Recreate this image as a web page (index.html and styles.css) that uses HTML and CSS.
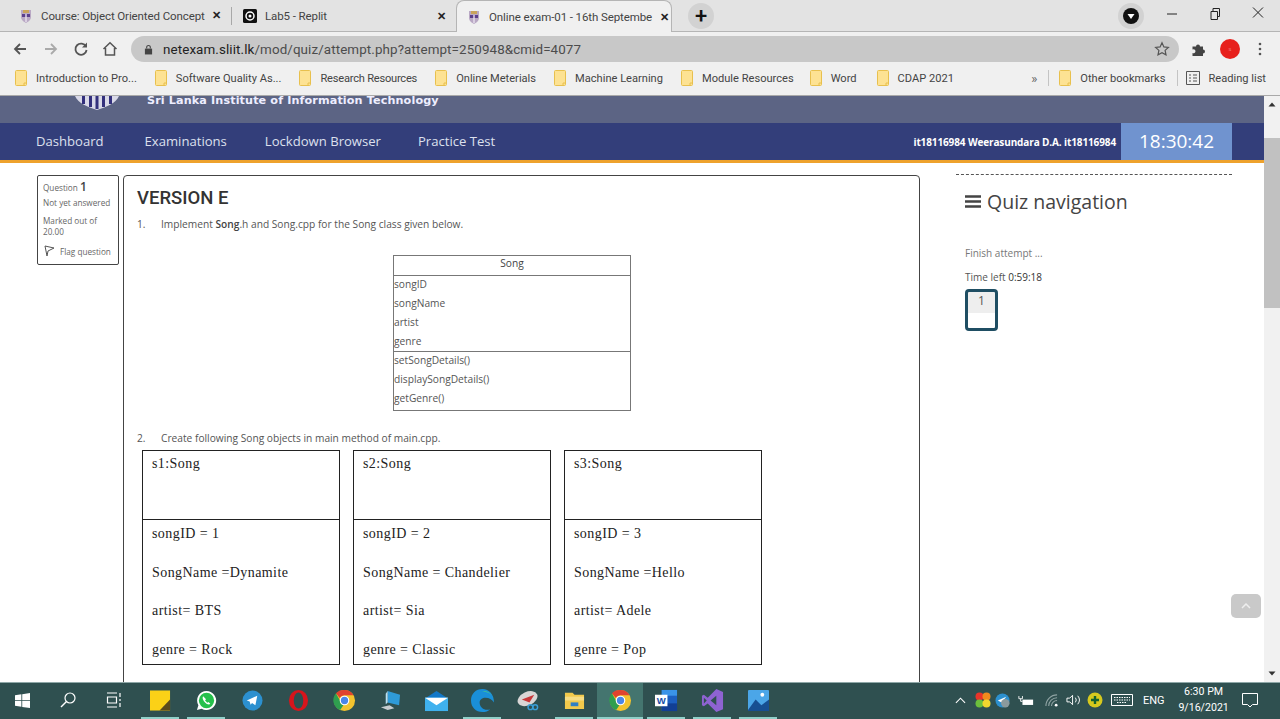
FILE: index.html
```html
<!DOCTYPE html>
<html lang="en">
<head>
<meta charset="utf-8">
<title>Online exam-01 - 16th September</title>
<link rel="stylesheet" href="styles.css">
</head>
<body>
<svg width="0" height="0" class="defs">
  <defs>
    <symbol id="shield" viewBox="0 0 14 14"><path d="M2 1h10v7c0 3-3 5-5 6-2-1-5-3-5-6z" fill="#b9a8c4"/><path d="M3 5h8v3H3z" fill="#5b3f8c"/><path d="M4 1h6v3H4z" fill="#c9a35c"/><path d="M6.300 5h1.400v8H6.300z" fill="#e8e0ee"/></symbol>
    <symbol id="folder" viewBox="0 0 12 16"><path d="M.5 1.500a1 1 0 0 1 1-1h9a1 1 0 0 1 1 1v13a1 1 0 0 1-1 1h-9a1 1 0 0 1-1-1z" fill="#fde293" stroke="#e8c04e"/><path d="M9 15.500V13h2.500" fill="none" stroke="#e8c04e"/></symbol>
    <symbol id="chrome" viewBox="0 0 24 24"><circle cx="12" cy="12" r="11" fill="#f2c32e"/><path d="M12 1a11 11 0 0 1 9.500 5.500H12A5.500 5.500 0 0 0 7 9.500L3 4.500A11 11 0 0 1 12 1z" fill="#e0432f"/><path d="M3 4.500 7.300 12a5 5 0 0 0 3.500 5L7.500 22A11 11 0 0 1 3 4.500z" fill="#2f9e4f"/><circle cx="12" cy="12" r="5" fill="#fff"/><circle cx="12" cy="12" r="3.800" fill="#4a86e8"/></symbol>
  </defs>
</svg>
<header class="browser">
  <div class="tabstrip">
    <div class="tab tab-one">
      <svg class="favicon"><use href="#shield"/></svg>
      <span class="tab-title">Course: Object Oriented Concept</span>
      <span class="tab-close">✕</span>
    </div>
    <div class="tab tab-two">
      <svg class="favicon" viewBox="0 0 14 14"><rect width="14" height="14" rx="1.500" fill="#111"/><circle cx="7" cy="7" r="4" fill="none" stroke="#fff" stroke-width="1.500"/><circle cx="7" cy="7" r="1.500" fill="#fff"/></svg>
      <span class="tab-title">Lab5 - Replit</span>
      <span class="tab-close">✕</span>
    </div>
    <div class="tab tab-active">
      <svg class="favicon"><use href="#shield"/></svg>
      <span class="tab-title">Online exam-01 - 16th Septembe</span>
      <span class="tab-close">✕</span>
    </div>
    <div class="new-tab">+</div>
    <div class="window-controls">
      <div class="media-badge"><svg width="16" height="16" viewBox="0 0 16 16"><circle cx="8" cy="8" r="8" fill="#111"/><path d="M4.500 6h7L8 11z" fill="#fff"/></svg></div>
      <svg class="win-btn" viewBox="0 0 44 20"><path d="M19 11h10" stroke="#222" fill="none"/></svg>
      <svg class="win-btn" viewBox="0 0 44 20"><path d="M19 8.500h6.500v8H19zM21 8.500V5.500h6.500v8h-2" stroke="#222" fill="none"/></svg>
      <svg class="win-btn" viewBox="0 0 44 20"><path d="M17 4.500l10 10M27 4.500l-10 10" stroke="#222" fill="none"/></svg>
    </div>
  </div>
  <div class="toolbar">
    <svg class="tool tool-back" viewBox="0 0 16 16"><path d="M14 8H3M8 3 3 8l5 5" fill="none" stroke="#555" stroke-width="1.800"/></svg>
    <svg class="tool tool-forward" viewBox="0 0 16 16"><path d="M2 8h11M8 3l5 5-5 5" fill="none" stroke="#aaa" stroke-width="1.800"/></svg>
    <svg class="tool tool-reload" viewBox="0 0 16 16"><path d="M13 5.500A5.600 5.600 0 1 0 13.600 9" fill="none" stroke="#555" stroke-width="1.800"/><path d="M14 1.500v5h-5z" fill="#555"/></svg>
    <svg class="tool tool-home" viewBox="0 0 16 16"><path d="M1.500 8 8 1.800 14.500 8M3.500 7v7h9V7" fill="none" stroke="#555" stroke-width="1.500"/></svg>
    <div class="omnibox">
      <svg class="lock" viewBox="0 0 10 12"><path d="M1 5h8v6.500H1z" fill="#444"/><path d="M3 5V3.500a2 2 0 0 1 4 0V5" fill="none" stroke="#444" stroke-width="1.200"/></svg>
      <span class="url">netexam.sliit.lk<span class="url-path">/mod/quiz/attempt.php?attempt=250948&amp;cmid=4077</span></span>
      <svg class="star" viewBox="0 0 16 16"><path d="m8 1.800 1.900 4.100 4.500.5-3.300 3 .9 4.400L8 11.600l-4 2.200.9-4.400-3.300-3 4.500-.5z" fill="none" stroke="#555" stroke-width="1.200"/></svg>
    </div>
    <svg class="puzzle" viewBox="0 0 16 16"><path d="M1.500 5.500h3.500a2 2 0 1 1 4 0h3v3a2 2 0 1 1 0 4v2.500H1.500v-3a2 2 0 1 0 0-3.500z" fill="#444"/></svg>
    <div class="avatar">s</div>
    <svg class="kebab" viewBox="0 0 4 14"><circle cx="2" cy="2" r="1.300" fill="#555"/><circle cx="2" cy="7" r="1.300" fill="#555"/><circle cx="2" cy="12" r="1.300" fill="#555"/></svg>
  </div>
  <nav class="bookmarks">
    <a class="bm bm-1"><svg class="folder"><use href="#folder"/></svg>Introduction to Pro...</a>
    <a class="bm bm-2"><svg class="folder"><use href="#folder"/></svg>Software Quality As...</a>
    <a class="bm bm-3"><svg class="folder"><use href="#folder"/></svg>Research Resources</a>
    <a class="bm bm-4"><svg class="folder"><use href="#folder"/></svg>Online Meterials</a>
    <a class="bm bm-5"><svg class="folder"><use href="#folder"/></svg>Machine Learning</a>
    <a class="bm bm-6"><svg class="folder"><use href="#folder"/></svg>Module Resources</a>
    <a class="bm bm-7"><svg class="folder"><use href="#folder"/></svg>Word</a>
    <a class="bm bm-8"><svg class="folder"><use href="#folder"/></svg>CDAP 2021</a>
    <span class="bm-more">»</span>
    <span class="bm-sep"></span>
    <a class="bm bm-9"><svg class="folder"><use href="#folder"/></svg>Other bookmarks</a>
    <span class="bm-sep bm-sep-two"></span>
    <a class="bm bm-10"><svg class="reading" viewBox="0 0 14 14"><path d="M.5.500h13v13H.500zM3 4h2M3 7h2M3 10h2M7 4h4M7 7h4M7 10h4" fill="none" stroke="#555"/></svg>Reading list</a>
  </nav>
</header>

<div class="viewport">
  <div class="page">
    <div class="brand">
      <svg class="brand-logo" viewBox="0 0 44 14"><path d="M0 0h44c-3 7-12 11-22 14C12 11 3 7 0 0z" fill="#d9d9e8"/><path d="M7 0h3v8H7zM14 0h3v11h-3zM20.500 0h3v13h-3zM27 0h3v11h-3zM34 0h3v8h-3z" fill="#33307c"/></svg>
      <span class="brand-name">Sri Lanka Institute of Information Technology</span>
    </div>
    <div class="navbar">
      <a class="nav-link nav-dash">Dashboard</a>
      <a class="nav-link nav-exam">Examinations</a>
      <a class="nav-link nav-lock">Lockdown Browser</a>
      <a class="nav-link nav-test">Practice Test</a>
      <span class="user-name">it18116984 Weerasundara D.A. it18116984</span>
      <span class="timer">18:30:42</span>
    </div>
    <main class="main">
      <aside class="q-info">
        <div class="q-no">Question <b>1</b></div>
        <div class="q-line">Not yet answered</div>
        <div class="q-line q-mark">Marked out of 20.00</div>
        <div class="q-flag">
          <svg class="flag" viewBox="0 0 12 12"><path d="M2 1 11 3 5 6 4 11z" fill="none" stroke="#555"/></svg>
          Flag question
        </div>
      </aside>
      <section class="question">
        <h1 class="version">VERSION E</h1>
        <p class="step"><span class="step-no">1.</span>Implement <b>Song</b>.h and Song.cpp for the Song class given below.</p>
        <div class="uml">
          <div class="uml-head">Song</div>
          <div class="uml-attrs">
            <div>songID</div><div>songName</div><div>artist</div><div>genre</div>
          </div>
          <div class="uml-methods">
            <div>setSongDetails()</div><div>displaySongDetails()</div><div>getGenre()</div>
          </div>
        </div>
        <p class="step step-two"><span class="step-no">2.</span>Create following Song objects in main method of main.cpp.</p>
        <div class="objects">
          <div class="obj">
            <div class="obj-name">s1:Song</div>
            <div class="obj-fields"><div>songID = 1</div><div>SongName =Dynamite</div><div>artist= BTS</div><div>genre = Rock</div></div>
          </div>
          <div class="obj">
            <div class="obj-name">s2:Song</div>
            <div class="obj-fields"><div>songID = 2</div><div>SongName = Chandelier</div><div>artist= Sia</div><div>genre = Classic</div></div>
          </div>
          <div class="obj">
            <div class="obj-name">s3:Song</div>
            <div class="obj-fields"><div>songID = 3</div><div>SongName =Hello</div><div>artist= Adele</div><div>genre = Pop</div></div>
          </div>
        </div>
      </section>
      <aside class="quiz-nav">
        <h2 class="quiz-title"><svg class="burger" viewBox="0 0 16 13"><path d="M0 1.500h16M0 6.500h16M0 11.500h16" stroke="#444" stroke-width="2.400"/></svg>Quiz navigation</h2>
        <div class="finish">Finish attempt ...</div>
        <div class="time-left">Time left <span class="time-val">0:59:18</span></div>
        <div class="q-button"><span class="q-button-no">1</span></div>
      </aside>
    </main>
    <button class="to-top"><svg width="10" height="6" viewBox="0 0 10 6"><path d="M1 5l4-4 4 4" fill="none" stroke="#eee" stroke-width="1.500"/></svg></button>
  </div>
  <div class="scrollbar">
    <svg class="sb-arrow" viewBox="0 0 16 16"><path d="M4.500 10 8 6l3.500 4z" fill="#333"/></svg>
    <div class="sb-track"><div class="sb-thumb"></div></div>
    <svg class="sb-arrow" viewBox="0 0 16 16"><path d="M4.500 6 8 10l3.500-4z" fill="#333"/></svg>
  </div>
</div>

<footer class="taskbar">
  <div class="task"><svg viewBox="0 0 16 16" class="ti ti-win"><path d="M0 2.300 6.800 1.300v6.300H0zM7.700 1.200 16 0v7.600H7.700zM0 8.400h6.800v6.300L0 13.700zM7.700 8.400H16V16l-8.300-1.200z" fill="#fff"/></svg></div>
  <div class="task"><svg viewBox="0 0 16 16" class="ti ti-small"><circle cx="10" cy="6" r="5" fill="none" stroke="#fff" stroke-width="1.200"/><path d="M6.500 9.500 1 15" stroke="#fff" stroke-width="1.400"/></svg></div>
  <div class="task"><svg viewBox="0 0 16 16" class="ti ti-small"><path d="M1 1h10M1 15h10M1.500 5h9v6h-9zM14 1v4M14 7v2M14 11v4" fill="none" stroke="#fff" stroke-width="1.200"/></svg></div>
  <div class="task task-open"><svg viewBox="0 0 22 22" class="ti"><rect width="21" height="21" y=".5" fill="#fbd117"/><path d="M21 10v11.500H10z" fill="#5b4a1c"/></svg></div>
  <div class="task task-open"><svg viewBox="0 0 22 22" class="ti"><path d="M11 1a10 10 0 0 0-8.500 15L1 21l5-1.400A10 10 0 1 0 11 1z" fill="#fff"/><circle cx="11" cy="11" r="8" fill="#25c04c"/><path d="M7.500 6.500c-1.500 2 .5 5 2 6.500s4 3 5.500 1.500l-2-2-1 .8c-1-.5-2-1.500-2.500-2.500l1-1z" fill="#fff"/></svg></div>
  <div class="task"><svg viewBox="0 0 22 22" class="ti"><circle cx="11" cy="11" r="10.500" fill="#2c90cf"/><path d="M5 11l11-5-2 10-3.500-2.500-1.500 2-1-3.500z" fill="#fff"/></svg></div>
  <div class="task"><svg viewBox="0 0 22 22" class="ti"><ellipse cx="11" cy="11" rx="10" ry="11" fill="#d8151c"/><ellipse cx="11" cy="11" rx="5" ry="8.500" fill="#2f5050"/></svg></div>
  <div class="task"><svg class="ti ti-wide"><use href="#chrome"/></svg></div>
  <div class="task"><svg viewBox="0 0 22 22" class="ti"><path d="M8 1l13 4-1 11-12-3z" fill="#2f9bd8"/><path d="M1 18l9-2 5 3-7 2z" fill="#c8cdd0"/><path d="M6 4l2-3v12l-2 2z" fill="#b9e0f2"/></svg></div>
  <div class="task"><svg viewBox="0 0 24 22" class="ti ti-wide"><path d="M12 1 24 9v13H0V9z" fill="#1278c8"/><path d="M0 8h24v14H0z" fill="#3fb1ee"/><path d="M0 8l12 8 12-8z" fill="#fff"/></svg></div>
  <div class="task task-open"><svg viewBox="0 0 24 24" class="ti ti-wide"><path d="M12 0C5 0 0 5 0 12c0 7 5 12 12 12 3 0 6-1 8-3-5 2-11-1-11-7 0-3 3-5 6-5 4 0 7 2 9 5C24 6 19 0 12 0z" fill="#1a8fd8"/><path d="M24 14c0-7-6-14-13-11 7-1 13 3 13 11z" fill="#48cf8a"/></svg></div>
  <div class="task task-short"><svg viewBox="0 0 24 22" class="ti ti-wide"><ellipse cx="11" cy="9" rx="11" ry="7" transform="rotate(-25 11 9)" fill="#d9d6d6"/><path d="M5 10l13-5-5 8z" fill="#c8383a"/><circle cx="14" cy="18" r="2.500" fill="none" stroke="#3a9fd8" stroke-width="1.500"/><circle cx="19" cy="18" r="2.500" fill="none" stroke="#3a9fd8" stroke-width="1.500"/></svg></div>
  <div class="task task-open"><svg viewBox="0 0 22 20" class="ti"><path d="M1 2h8l2 2h10v15H1z" fill="#f2c94c"/><path d="M1 6h20v4H1z" fill="#f7dd84"/><path d="M7 12h8v4H7z" fill="#2f7fc4"/></svg></div>
  <div class="task task-active"><svg class="ti ti-wide"><use href="#chrome"/></svg></div>
  <div class="task task-open"><svg viewBox="0 0 24 22" class="ti ti-wide"><path d="M7 0h16v22H7z" fill="#1d5fc0"/><path d="M7 0h16v6H7z" fill="#3a93e8"/><path d="M7 14h16v8H7z" fill="#123f94"/><path d="M0 5h13v12H0z" fill="#fff"/><text x="6.500" y="15" font-size="10" font-weight="700" text-anchor="middle" fill="#174ea6" font-family="Liberation Sans">W</text></svg></div>
  <div class="task task-open"><svg viewBox="0 0 22 24" class="ti ti-wide"><path d="M15 0 22 3v18l-7 3-9-9-4 3-2-1V7l2-1 4 3z" fill="#8e63d2"/><path d="M15 7v10l-6-5z" fill="#2f5050"/><path d="M2 9l3 3-3 3z" fill="#2f5050"/></svg></div>
  <div class="task task-open"><svg viewBox="0 0 22 22" class="ti"><rect width="22" height="22" rx="1" fill="#4ba6e8"/><path d="M0 21l8-11 6 6 8-6v12H0z" fill="#174f92"/><circle cx="15" cy="5" r="2" fill="#fff"/></svg></div>
  <div class="tray">
    <svg class="tray-chev" viewBox="0 0 12 7"><path d="M1 6l5-5 5 5" fill="none" stroke="#fff" stroke-width="1.200"/></svg>
    <svg class="tray-colors" viewBox="0 0 16 16"><circle cx="4.500" cy="4.500" r="4" fill="#e8342a"/><circle cx="11.500" cy="4.500" r="4" fill="#f08a1d"/><circle cx="4.500" cy="11.500" r="4" fill="#6cbf3c"/><circle cx="11.500" cy="11.500" r="4" fill="#f2d62e"/></svg>
    <svg class="tray-tg" viewBox="0 0 16 16"><circle cx="8" cy="8" r="7.500" fill="#2c90cf"/><path d="M3 8l9-4-5 6z" fill="#fff"/><circle cx="11" cy="11" r="4.500" fill="#8a9a9d"/></svg>
    <svg class="tray-batt" viewBox="0 0 18 14"><path d="M5 6h12v6H5z" fill="#fff"/><path d="M1 2v3h4V2M3 5v3h2" fill="none" stroke="#fff"/></svg>
    <svg class="tray-wifi" viewBox="0 0 14 14"><path d="M1 13A12 12 0 0 1 13 1M4 13a9 9 0 0 1 9-9M7 13a6 6 0 0 1 6-6" fill="none" stroke="#8fa3a3" stroke-width="1.200"/><circle cx="12" cy="12" r="1.500" fill="#fff"/></svg>
    <svg class="tray-vol" viewBox="0 0 16 14"><path d="M1 5h3l3-3v10L4 9H1z" fill="none" stroke="#fff"/><path d="M10 4.500a4 4 0 0 1 0 5M12.500 2.500a7 7 0 0 1 0 9" fill="none" stroke="#fff"/></svg>
    <svg class="tray-plus" viewBox="0 0 16 16"><circle cx="8" cy="8" r="7.500" fill="#d6c91e"/><path d="M8 4v8M4 8h8" stroke="#14612e" stroke-width="2.400"/></svg>
    <svg class="tray-kbd" viewBox="0 0 22 12"><path d="M.5.500h21v11H.500z" fill="none" stroke="#fff"/><path d="M3 3.500h16M3 6h16M6 8.500h10" stroke="#fff" stroke-dasharray="1.500 1"/></svg>
    <span class="tray-lang">ENG</span>
    <span class="tray-clock"><span>6:30 PM</span><span>9/16/2021</span></span>
    <svg class="tray-note" viewBox="0 0 16 15"><path d="M.5.500h15v11h-5l-2.500 2.500-2.500-2.500h-5z" fill="none" stroke="#fff"/></svg>
  </div>
</footer>
</body>
</html>
```

FILE: styles.css
```css
* { box-sizing: border-box; }
html, body { margin: 0; padding: 0; }
body {
  width: 1280px;
  height: 719px;
  overflow: hidden;
  display: flex;
  flex-direction: column;
  font-family: "Open Sans", sans-serif;
  background: #fff;
}
.defs { position: absolute; }

/* browser chrome */
.browser { flex: none; height: 96px; background: #f0f0f0; border-bottom: 1px solid #a9a9a9; }
.tabstrip { display: flex; align-items: center; height: 32px; background: #e3e3e3; border-bottom: 1px solid #b5b5b5; }
.tab { display: flex; align-items: center; height: 31px; padding-top: 1px; font: 11.500px "Roboto", sans-serif; letter-spacing: -.1px; color: #444; }
.tab-one { width: 232px; padding-left: 19px; border-right: 1px solid #a8a8a8; height: 18px; padding-top: 0; }
.tab-two { width: 224px; padding-left: 11px; }
.tab-active { width: 216px; padding-left: 10px; background: #f0f0f0; border: 1px solid #b5b5b5; border-bottom: 0; border-radius: 8px 8px 0 0; height: 32px; margin-bottom: -1px; }
.favicon { width: 14px; height: 14px; flex: none; }
.tab-title { margin-left: 8px; flex: 1; white-space: nowrap; overflow: hidden; }
.tab-close { width: 14px; flex: none; margin-right: 8px; font-size: 11px; font-weight: 700; color: #222; text-align: center; }
.tab-two .tab-close { margin-right: 8px; }
.tab-active .tab-close { margin-right: 0; }
.new-tab { width: 26px; height: 26px; margin-left: 16px; border-radius: 50%; background: #d2d2d2; color: #111; font: 500 22px/25px "Roboto", sans-serif; text-align: center; }
.window-controls { display: flex; align-items: center; margin-left: auto; }
.media-badge { display: flex; align-items: center; justify-content: center; width: 26px; height: 26px; border-radius: 50%; background: #d2d2d2; margin-right: 4px; }
.win-btn { width: 44px; height: 20px; margin-top: -5px; }

.toolbar { display: flex; align-items: center; height: 34px; }
.tool { width: 16px; height: 16px; flex: none; }
.tool-back { margin-left: 12px; }
.tool-forward { margin-left: 15px; }
.tool-reload { margin-left: 14px; }
.tool-home { margin-left: 13px; }
.omnibox { display: flex; align-items: center; width: 1048px; height: 26px; margin-left: 13px; padding: 0 9px 0 13px; border-radius: 13px; background: #c8c8c8; }
.lock { width: 9px; height: 11px; flex: none; }
.url { margin-left: 10px; font: 13.400px "Roboto", sans-serif; color: #222; letter-spacing: .1px; white-space: nowrap; }
.url-path { color: #4c4c4c; }
.star { width: 16px; height: 16px; margin-left: auto; }
.puzzle { width: 16px; height: 16px; margin-left: 12px; }
.avatar { width: 20px; height: 20px; margin-left: 13px; border-radius: 50%; background: #e7201c; color: #e88; font-size: 6px; line-height: 20px; text-align: center; }
.kebab { width: 4px; height: 14px; margin-left: 18px; }

.bookmarks { display: flex; align-items: center; height: 24px; padding: 0 14px 0 15px; font: 11.100px "Roboto", sans-serif; color: #444; white-space: nowrap; }
.bm { display: flex; align-items: center; }
.folder { width: 12px; height: 16px; margin-right: 9px; flex: none; }
.reading { width: 14px; height: 14px; margin-right: 8px; flex: none; }
.bm-2 { margin-left: 18px; }
.bm-3 { letter-spacing: -.22px; }
.bm-3, .bm-4, .bm-5, .bm-6 { margin-left: 18px; }
.bm-7 { margin-left: 16px; }
.bm-8 { margin-left: 20px; }
.bm-more { margin-left: auto; font-size: 13px; color: #666; }
.bm-sep { width: 1px; height: 16px; margin-left: 11px; background: #c4c4c4; }
.bm-9 { margin-left: 10px; }
.bm-sep-two { margin-left: 12px; }
.bm-10 { margin-left: 8px; }

/* page */
.viewport { flex: none; display: flex; height: 586px; }
.page { position: relative; flex: none; width: 1264px; height: 586px; overflow: hidden; }
.brand { display: flex; height: 27px; padding-left: 75px; background: #5c6484; }
.brand-logo { width: 44px; height: 14px; flex: none; }
.brand-name { margin-left: 28px; font: 700 11.200px/9px "DejaVu Sans", sans-serif; color: #eef; letter-spacing: .12px; }
.navbar { display: flex; align-items: center; height: 40px; border-bottom: 3px solid #eea22d; background: #333e7a; color: #dde0ee; }
.nav-link { font-size: 13.100px; margin-top: -2px; }
.nav-dash { margin-left: 36px; }
.nav-exam { margin-left: 41px; }
.nav-lock { margin-left: 38px; }
.nav-test { margin-left: 37px; }
.user-name { margin-left: auto; font-size: 10px; font-weight: 700; letter-spacing: -.12px; color: #fff; }
.timer { width: 111px; height: 37px; margin: 0 32px 0 5px; background: #7093cf; color: #fff; font-size: 19px; line-height: 37px; text-align: center; }

.main { display: flex; align-items: flex-start; padding: 12px 0 0 37px; }
.q-info { flex: none; width: 82px; height: 90px; margin-right: 4px; padding: 5px 4px 4px 5px; border: 1px solid #444; border-radius: 2px; font-size: 8.200px; line-height: 11px; color: #666; }
.q-no b { font-size: 12px; font-weight: 600; color: #444; }
.q-line { margin-top: 4px; }
.q-mark { margin-top: 7px; }
.q-flag { display: flex; align-items: center; margin-top: 8px; gap: 5px; }
.flag { width: 12px; height: 12px; }
.question { flex: none; width: 797px; height: 560px; padding: 0 13px; border: 1px solid #444; border-radius: 4px; color: #555; font-size: 10.200px; }
.version { margin: 10px 0 0; font: 500 18.500px/24px "Roboto", sans-serif; color: #333; }
.step { margin: 7px 0 0; line-height: 14px; }
.step b { font-weight: 600; color: #444; }
.step-no { display: inline-block; width: 24px; }
.step-two { margin-top: 20px; }
.uml { width: 238px; height: 156px; margin: 24px 0 0 256px; border: 1px solid #777; color: #555; line-height: 19px; }
.uml-head { height: 20px; text-align: center; color: #444; line-height: 15px; border-bottom: 1px solid #777; }
.uml-attrs { height: 77px; border-bottom: 1px solid #777; }
.uml-attrs div:first-child { margin-top: -1px; }
.uml-methods { height: 57px; }
.uml-methods div:first-child { margin-top: -1px; }
.objects { display: flex; margin: 5px 0 0 5px; gap: 13px; font: 14px "Liberation Serif", serif; letter-spacing: .42px; color: #222; }
.obj { width: 198px; height: 215px; border: 1px solid #222; }
.obj-name { height: 69px; padding: 4px 9px; line-height: 18px; border-bottom: 1px solid #222; }
.obj-fields { padding: 4px 9px; line-height: 38.500px; }
.obj-fields div { height: 38.500px; line-height: 19px; }

.quiz-nav { flex: none; width: 276px; margin-left: 36px; margin-top: -1px; padding-left: 9px; border-top: 1px dashed #555; color: #555; font-size: 10px; }
.quiz-title { display: flex; align-items: center; margin: 13px 0 0; font-size: 19.500px; font-weight: 400; line-height: 27px; color: #444; }
.burger { width: 16px; height: 13px; margin-right: 6px; }
.finish { margin-top: 31px; color: #777; line-height: 14px; }
.time-left { margin-top: 10px; line-height: 14px; }
.time-val { color: #333; }
.q-button { width: 33px; height: 42px; margin-top: 5px; border: 3px solid #1f4e63; border-radius: 4px; background: linear-gradient(#eee 0 21px, #fff 21px); color: #555; font-size: 12px; line-height: 18px; text-align: center; }
.q-button-no { display: block; }
.to-top { position: absolute; left: 1231px; top: 498px; display: flex; align-items: center; justify-content: center; width: 30px; height: 24px; padding: 0; border: 0; border-radius: 5px; background: #c9c9c9; }

.scrollbar { flex: none; display: flex; flex-direction: column; width: 16px; background: #f1f1f1; }
.sb-arrow { width: 16px; height: 17px; flex: none; }
.sb-track { flex: 1; padding-top: 25px; }
.sb-thumb { height: 170px; background: #c1c1c1; }

/* taskbar */
.taskbar { flex: none; display: flex; height: 37px; background: #2f5050; border-top: 1px solid #8fa8a8; }
.task { position: relative; display: flex; flex: none; align-items: center; justify-content: center; width: 46px; height: 36px; padding-bottom: 2px; }
.task:first-child { width: 45px; }
.task-open::after, .task-active::after { content: ""; position: absolute; left: 4px; right: 4px; bottom: 0; height: 2px; background: #8fcfc8; }
.task-short::after { content: none; }
.task-active { background: #44756f; }
.task-active::after { left: 0; right: 0; }
.ti { width: 21px; height: 21px; }
.ti-wide { width: 23px; height: 23px; }
.ti-small { width: 16px; height: 16px; }
.ti-win { width: 15px; height: 15px; }
.tray { display: flex; flex: 1; align-items: center; padding-bottom: 2px; color: #fff; }
.tray svg { flex: none; }
.tray-chev { width: 11px; height: 7px; margin-left: 174px; }
.tray-colors { width: 16px; height: 16px; margin-left: 9px; }
.tray-tg { width: 15px; height: 15px; margin-left: 4px; }
.tray-batt { width: 16px; height: 13px; margin-left: 8px; }
.tray-wifi { width: 13px; height: 13px; margin-left: 11px; }
.tray-vol { width: 15px; height: 14px; margin-left: 8px; }
.tray-plus { width: 16px; height: 16px; margin-left: 6px; }
.tray-kbd { width: 22px; height: 12px; margin-left: 8px; }
.tray-lang { margin-left: 10px; font: 11px "Roboto", sans-serif; }
.tray-clock { display: flex; flex-direction: column; align-items: center; width: 56px; margin-left: 11px; font: 10.600px/16px "Roboto", sans-serif; }
.tray-note { width: 16px; height: 15px; margin-left: 10px; }
```
